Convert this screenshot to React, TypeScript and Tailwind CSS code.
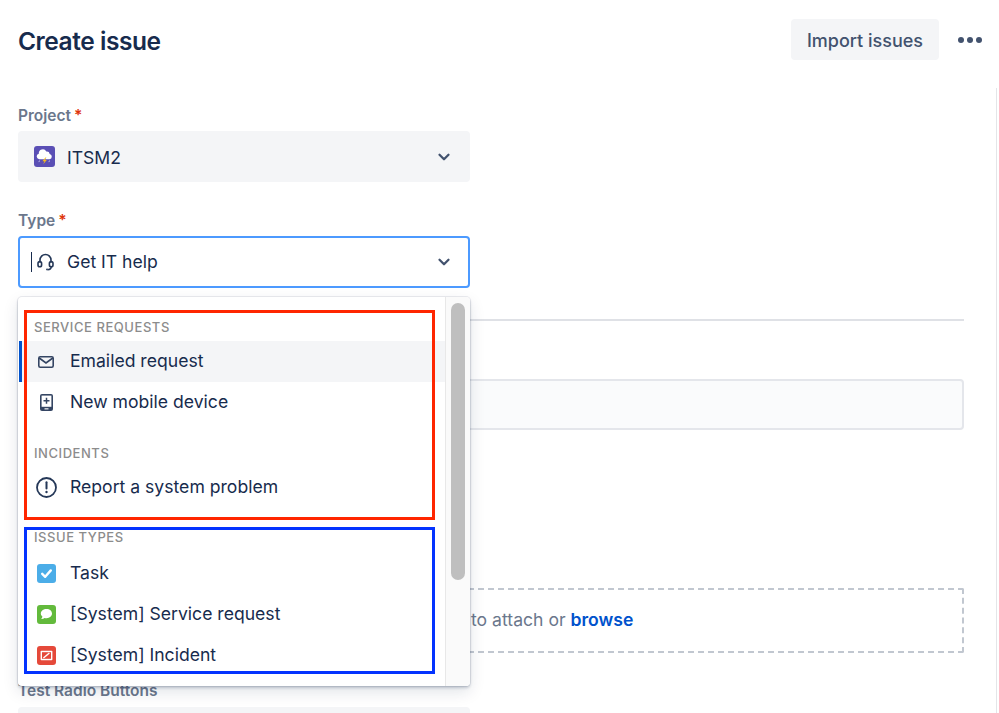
import { ChevronDown } from 'lucide-react';

const textDark = 'text-[#172B4D]';

function ProjectIcon() {
  return (
    <svg width="21" height="21" viewBox="0 0 21 21" className="shrink-0">
      <rect width="21" height="21" rx="3" fill="#5A4FB5" />
      <path d="M5.2 13.2a2.8 2.8 0 0 1-.4-5.5 4 4 0 0 1 7.5-2.2 3 3 0 0 1 3.4 2.4 2.7 2.7 0 0 1-.2 5.3z" fill="#fff" />
      <path d="M11.4 11.6l-3 3.6h2l-1.2 3 3.6-4.2h-2l1.6-2.4z" fill="#F5B81F" />
      <path d="M5.5 14.5l-.6 1.6M15.5 14.5l-.6 1.6" stroke="#C9C4EE" strokeWidth="0.9" />
    </svg>
  );
}

function HeadsetIcon() {
  return (
    <svg width="17" height="18" viewBox="0 0 17 18" fill="none" stroke="#253858" strokeWidth="1.6" className="shrink-0">
      <path d="M3 9.5V7a5.5 5.5 0 0 1 11 0v2.5" />
      <rect x="1" y="8.6" width="3.6" height="5.2" rx="1.8" />
      <rect x="12.4" y="8.6" width="3.6" height="5.2" rx="1.8" />
      <path d="M14.2 13.8c0 1.8-1.4 2.8-3.6 2.8" />
      <circle cx="10" cy="16.4" r="0.9" fill="#253858" stroke="none" />
    </svg>
  );
}

function MailIcon() {
  return (
    <svg width="16" height="12" viewBox="0 0 16 12" fill="none" stroke="#344563" strokeWidth="1.6">
      <rect x="0.8" y="0.8" width="14.4" height="10.4" rx="1.4" />
      <path d="M1.2 2l6.8 5 6.8-5" />
    </svg>
  );
}

function MobileIcon() {
  return (
    <svg width="13" height="17" viewBox="0 0 13 17">
      <rect width="13" height="17" rx="2" fill="#344563" />
      <rect x="1.6" y="1.6" width="9.8" height="11.2" fill="#fff" />
      <path d="M6.5 3.8v6M3.5 6.8h6" stroke="#344563" strokeWidth="1.5" />
      <rect x="4.5" y="14.3" width="4" height="1.1" fill="#fff" />
    </svg>
  );
}

function AlertIcon() {
  return (
    <svg width="21" height="21" viewBox="0 0 21 21" fill="none">
      <circle cx="10.5" cy="10.5" r="9.5" stroke="#253858" strokeWidth="1.8" />
      <path d="M10.5 5.2v6.4" stroke="#253858" strokeWidth="2" strokeLinecap="round" />
      <circle cx="10.5" cy="15" r="1.2" fill="#253858" />
    </svg>
  );
}

function TaskIcon() {
  return (
    <svg width="19" height="19" viewBox="0 0 19 19">
      <rect width="19" height="19" rx="3" fill="#4BADE8" />
      <path d="M5.2 9.8l3 3 5.6-6.4" fill="none" stroke="#fff" strokeWidth="2.4" strokeLinecap="round" strokeLinejoin="round" />
    </svg>
  );
}

function ServiceIcon() {
  return (
    <svg width="19" height="19" viewBox="0 0 19 19">
      <rect width="19" height="19" rx="3" fill="#63BA3C" />
      <path d="M9.6 4c3.2 0 5.4 2 5.4 4.6s-2.2 4.6-5.4 4.6c-.7 0-1.4-.1-2-.3-.9.8-2.1 1.2-3.4 1.1.7-.7 1.1-1.5 1.2-2.4-1-.8-1.6-1.8-1.6-3C3.8 6 6.4 4 9.6 4z" fill="#fff" />
    </svg>
  );
}

function IncidentIcon() {
  return (
    <svg width="19" height="19" viewBox="0 0 19 19">
      <rect width="19" height="19" rx="3" fill="#E5493A" />
      <rect x="3.6" y="4.8" width="11.8" height="9.4" rx="0.8" fill="#fff" />
      <rect x="5" y="6.2" width="9" height="6.6" fill="#E5493A" />
      <path d="M6.4 12l6-5" stroke="#fff" strokeWidth="1.4" />
    </svg>
  );
}

function FieldLabel({ children, required }: { children: string; required?: boolean }) {
  return (
    <div className="flex h-5 items-center gap-[3px] text-[15.5px] font-semibold leading-5 text-[#6B778C]">
      {children}
      {required && <span className="text-[#DE350B]">*</span>}
    </div>
  );
}

function GroupHeader({ children }: { children: string }) {
  return (
    <div className="flex h-5 items-center pl-[15px] pt-px text-[13px] font-medium tracking-[0.55px] text-[#8C8C8C]">
      {children}
    </div>
  );
}

function Option({ icon, label, active }: { icon: React.ReactNode; label: string; active?: boolean }) {
  return (
    <div
      className={`flex h-[41px] items-center border-l-[3px] text-[17.6px] ${textDark} ${
        active ? 'border-[#0052CC] bg-[#F4F5F7]' : 'border-transparent'
      }`}
    >
      <span className="flex w-[48px] shrink-0 justify-center">{icon}</span>
      <span>{label}</span>
    </div>
  );
}

export default function App() {
  return (
    <div className="relative h-[713px] w-[999px] overflow-hidden bg-white font-['Inter',sans-serif]">
      <div className="absolute bottom-0 right-[2px] top-[88px] w-px bg-[#E4E5E8]" />

      <div className="px-[18px] pt-[19px]">
        <div className="flex h-[41px] items-center">
          <h1 className={`pt-[3px] text-[24.5px] font-semibold tracking-[-0.45px] ${textDark}`}>Create issue</h1>
          <button className="ml-auto h-[41px] w-[148px] rounded-[4px] bg-[#F4F5F7] pt-px text-[18px] font-medium text-[#42526E]">
            Import issues
          </button>
          <div className="ml-[19px] mr-[-1px] flex w-[24px] justify-between">
            <span className="h-[6px] w-[6px] rounded-full bg-[#42526E]" />
            <span className="h-[6px] w-[6px] rounded-full bg-[#42526E]" />
            <span className="h-[6px] w-[6px] rounded-full bg-[#42526E]" />
          </div>
        </div>

        <div className="w-[946px]">
          <div className="mt-[46px]">
            <FieldLabel required>Project</FieldLabel>
          </div>
          <div className={`mt-[5px] flex h-[51px] w-[452px] items-center rounded-[4px] bg-[#F4F5F7] pl-[16px] pr-[17px] text-[17.6px] ${textDark}`}>
            <ProjectIcon />
            <span className="ml-[12px] mt-[3px]">ITSM2</span>
            <ChevronDown size={18} strokeWidth={3} className="ml-auto text-[#42526E]" />
          </div>

          <div className="mt-[29px]">
            <FieldLabel required>Type</FieldLabel>
          </div>
          <div className={`mt-[5px] flex h-[52px] w-[452px] items-center rounded-[4px] border-2 border-[#4C9AFF] pl-[11px] pr-[15px] text-[17.6px] ${textDark}`}>
            <span className="mr-[5px] h-[20px] w-px bg-[#172B4D]" />
            <HeadsetIcon />
            <span className="ml-[13px]">Get IT help</span>
            <ChevronDown size={18} strokeWidth={3} className="ml-auto text-[#42526E]" />
          </div>

          <div className="mt-[31px] h-[2px] bg-[#DFE1E6]" />

          <div className="mt-[58px] h-[51px] rounded-[4px] border-2 border-[#E4E6EB] bg-[#FAFBFC]" />

          <div className="mt-[158px] flex h-[65px] items-center rounded-[2px] border-2 border-dashed border-[#C1C7D0] pl-[451px] text-[17.6px] text-[#6B778C]">
            <span>
              to attach or <span className="font-semibold text-[#0052CC]">browse</span>
            </span>
          </div>

          <div className="mt-[28px]">
            <FieldLabel>Test Radio Buttons</FieldLabel>
          </div>
          <div className="mt-[6px] h-[50px] w-[452px] rounded-[4px] bg-[#F4F5F7]" />
        </div>
      </div>

      {/* Dropdown menu lying over the form */}
      <div className="absolute left-[18px] top-[297px] flex h-[389px] w-[452px] overflow-hidden rounded-[4px] bg-white shadow-[0_0_0_1px_rgba(9,30,66,0.08),0_2px_3px_rgba(9,30,66,0.2),0_6px_16px_rgba(9,30,66,0.12)]">
        <div className="w-[427px] pl-px pt-[20px]">
          <GroupHeader>SERVICE REQUESTS</GroupHeader>
          <div className="mt-[4px]">
            <Option icon={<MailIcon />} label="Emailed request" active />
            <Option icon={<MobileIcon />} label="New mobile device" />
          </div>
          <div className="mt-[20px]">
            <GroupHeader>INCIDENTS</GroupHeader>
          </div>
          <div className="mt-[4px]">
            <Option icon={<AlertIcon />} label="Report a system problem" />
          </div>
          <div className="mt-[19px]">
            <GroupHeader>ISSUE TYPES</GroupHeader>
          </div>
          <div className="mt-[6px]">
            <Option icon={<TaskIcon />} label="Task" />
            <Option icon={<ServiceIcon />} label="[System] Service request" />
            <Option icon={<IncidentIcon />} label="[System] Incident" />
          </div>
        </div>
        <div className="flex-1 border-l border-[#E8E8E8] bg-[#FAFAFA] pl-[5px] pt-[6px]">
          <div className="h-[277px] w-[14px] rounded-full bg-[#BFBFBF]" />
        </div>

        {/* Annotation frames */}
        <div className="absolute left-[6px] top-[13px] h-[210px] w-[411px] border-[3px] border-[#FF2600]" />
        <div className="absolute left-[6px] top-[230px] h-[147px] w-[411px] border-[3px] border-[#0433FF]" />
      </div>
    </div>
  );
}
